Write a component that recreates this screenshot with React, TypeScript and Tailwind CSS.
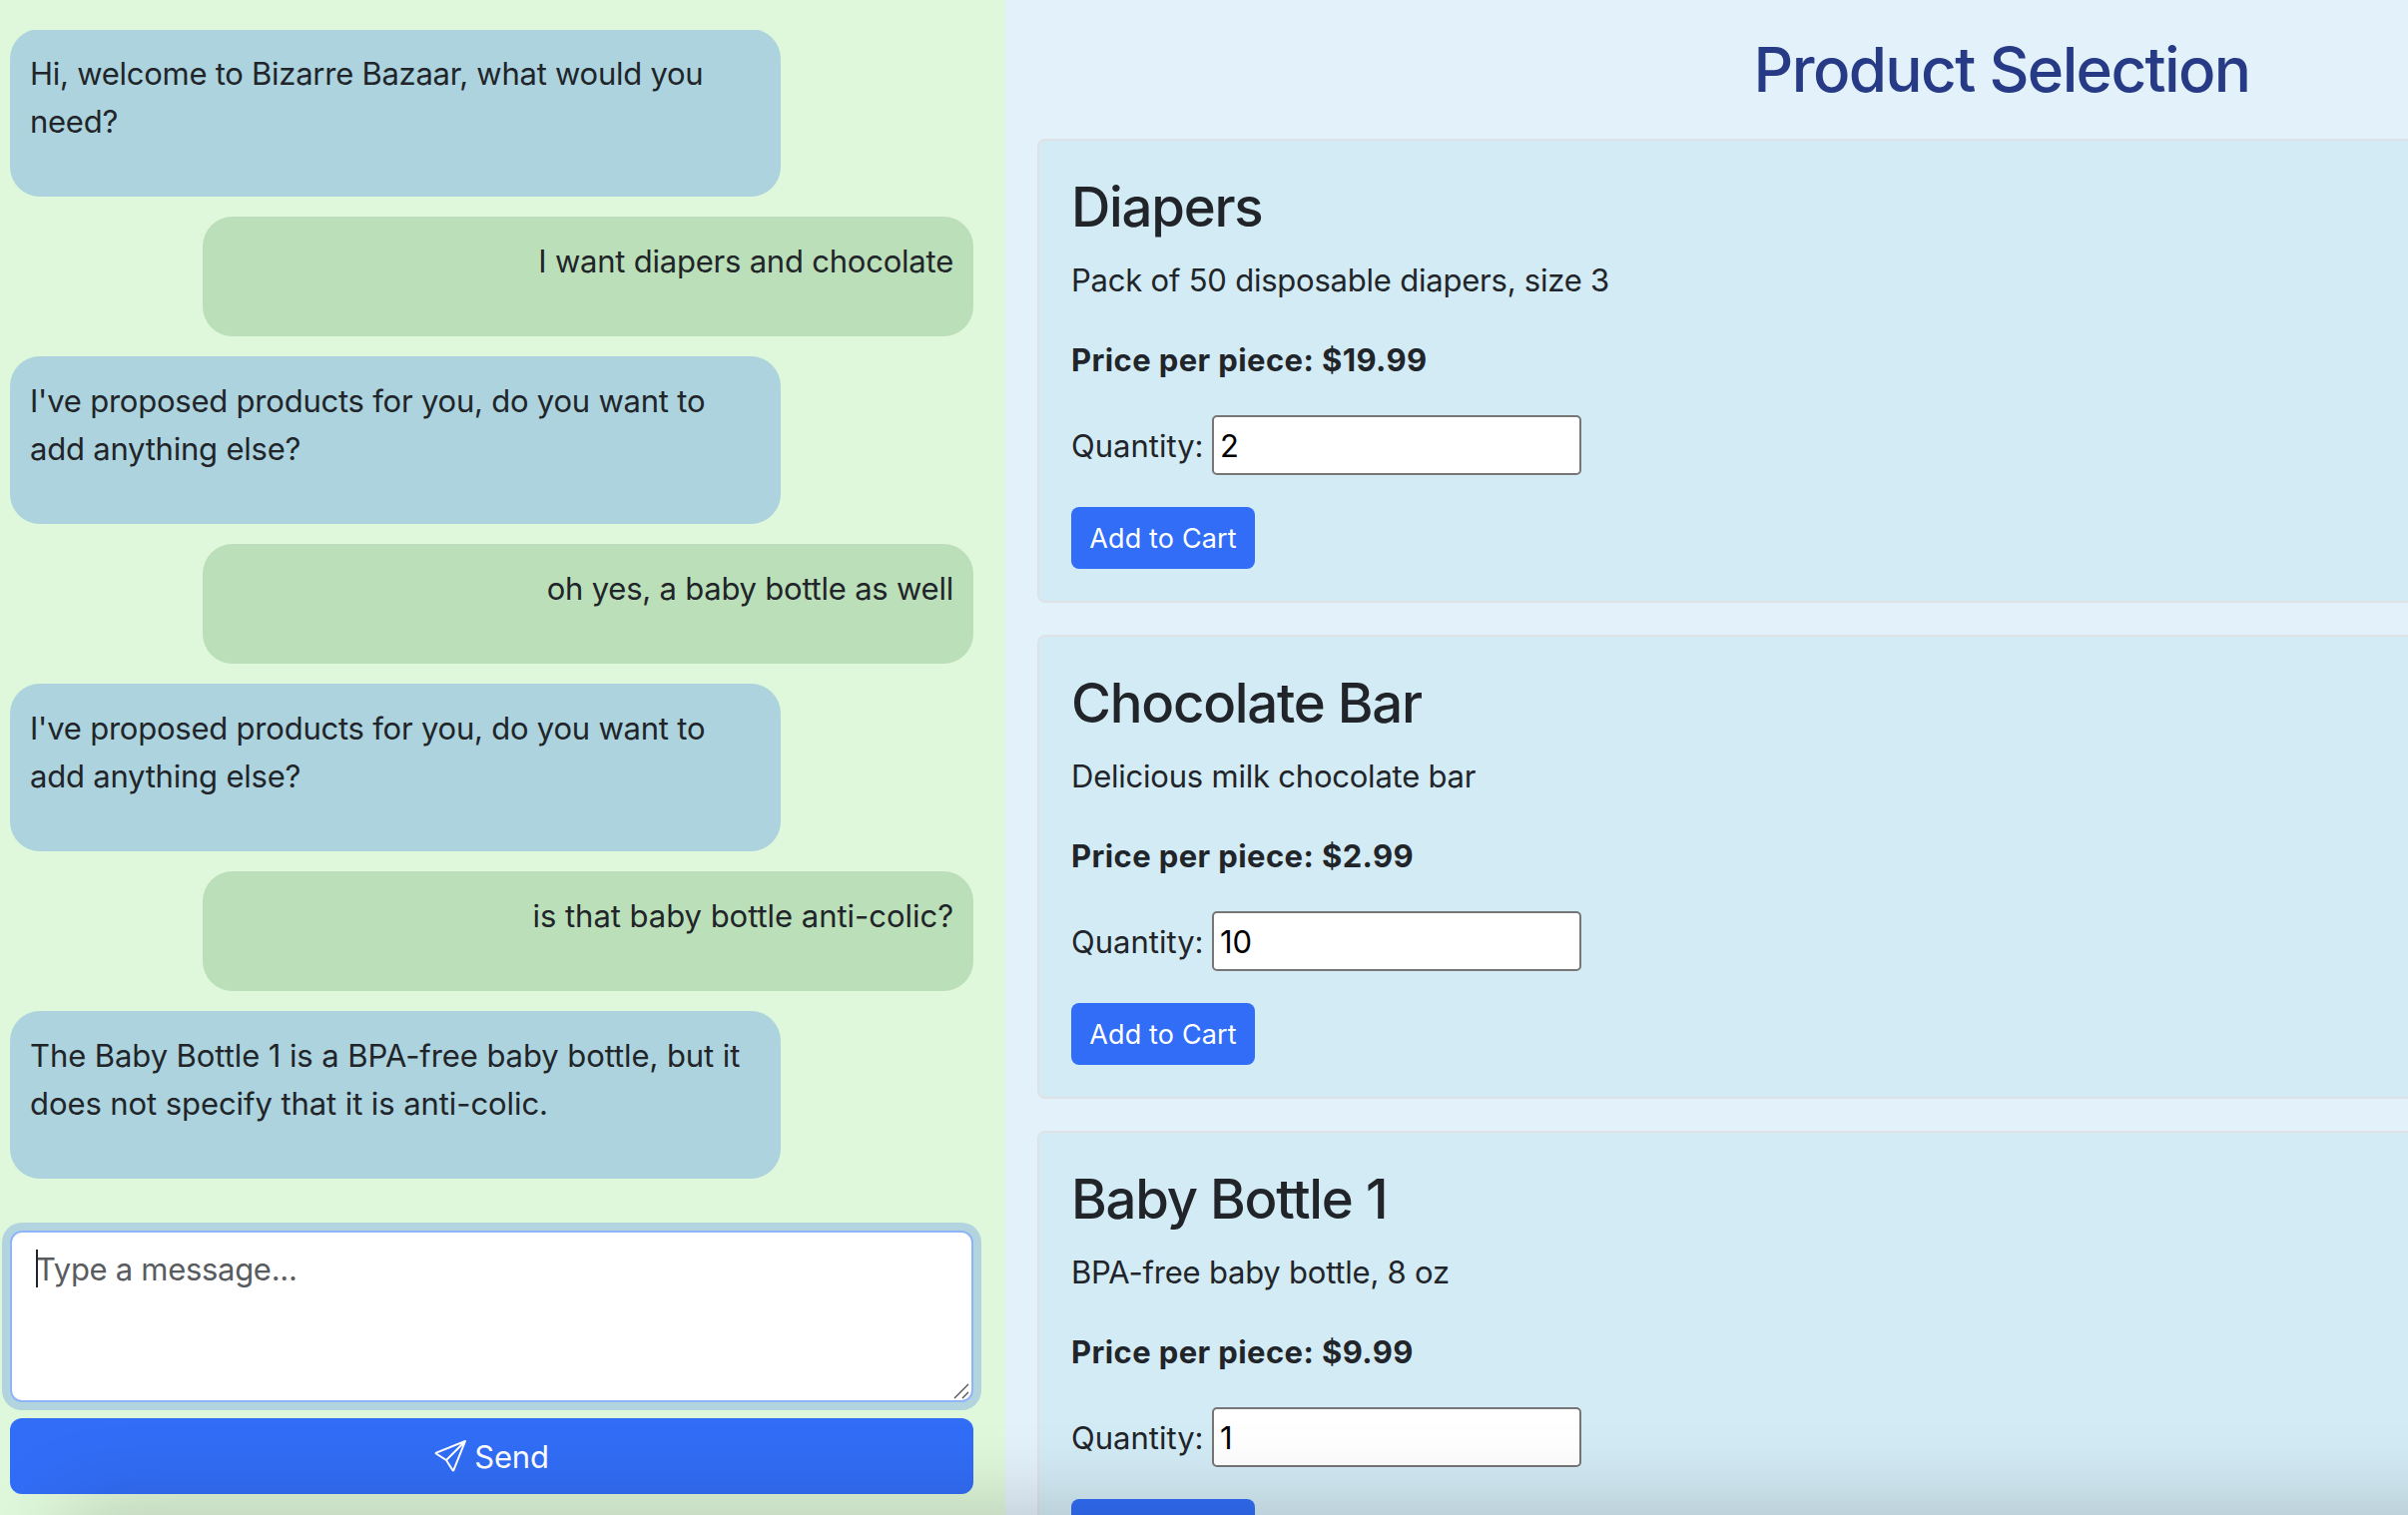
import { BsSend } from "react-icons/bs";

type Message = { from: "bot" | "user"; text: string; tracking?: string };
type Product = { name: string; description: string; price: string; quantity: number };

const messages: Message[] = [
  { from: "bot", text: "Hi, welcome to Bizarre Bazaar, what would you need?", tracking: "tracking-[-0.26px]" },
  { from: "user", text: "I want diapers and chocolate" },
  { from: "bot", text: "I've proposed products for you, do you want to add anything else?" },
  { from: "user", text: "oh yes, a baby bottle as well" },
  { from: "bot", text: "I've proposed products for you, do you want to add anything else?" },
  { from: "user", text: "is that baby bottle anti-colic?", tracking: "tracking-[-0.03px]" },
  {
    from: "bot",
    text: "The Baby Bottle 1 is a BPA-free baby bottle, but it does not specify that it is anti-colic.",
    tracking: "tracking-[-0.08px]",
  },
];

const products: Product[] = [
  { name: "Diapers", description: "Pack of 50 disposable diapers, size 3", price: "19.99", quantity: 2 },
  { name: "Chocolate Bar", description: "Delicious milk chocolate bar", price: "2.99", quantity: 10 },
  { name: "Baby Bottle 1", description: "BPA-free baby bottle, 8 oz", price: "9.99", quantity: 1 },
];

function Bubble({ from, text, tracking = "" }: Message) {
  const side = from === "bot" ? "self-start bg-[#acd3de]" : "self-end bg-[#bbdfb8] text-right";
  return (
    <div className={`w-[772px] shrink-0 rounded-[30px] px-5 pt-[21px] pb-[51px] ${side}`}>
      <p className={tracking}>{text}</p>
    </div>
  );
}

function ChatPanel() {
  return (
    <section className="flex w-[1007px] shrink-0 flex-col bg-[#dff7da] pt-[30px] pr-8 pl-2.5">
      <div className="h-[1203px] shrink-0 overflow-hidden">
        <div className="-mt-px flex flex-col gap-5">
          {messages.map((m, i) => (
            <Bubble key={i} {...m} />
          ))}
        </div>
      </div>
      <div className="relative h-[172px] shrink-0 rounded-xl border-2 border-[#8fb5f8] bg-white px-6 py-[13px] text-[#595c5f] ring-8 ring-[#b2d4df]">
        <span className="absolute top-[17px] left-6 h-[38px] w-[2px] bg-[#212529]" />
        <span className="tracking-[-0.3px]">Type a message...</span>
        <svg className="absolute right-0.5 bottom-px h-4 w-4" viewBox="0 0 16 16" stroke="#555" strokeWidth="1.4" fill="none">
          <path d="M1 15 15 1M9 15 15 9" />
        </svg>
      </div>
      <button className="mt-4 flex h-[76px] shrink-0 items-center justify-center gap-2 rounded-xl bg-[#316df6] pt-0.5 text-white">
        <BsSend className="-mt-0.5 h-8 w-8" />
        <span>Send</span>
      </button>
    </section>
  );
}

function ProductCard({ name, description, price, quantity }: Product) {
  return (
    <article className="h-[465px] shrink-0 rounded-lg border-2 border-[#dee2e6] bg-[#d3ebf5] p-8">
      <h3 className="pt-px text-[54.5px] leading-[67px] font-[530] tracking-[-1.25px]">{name}</h3>
      <p className="mt-4">{description}</p>
      <p className="mt-8 font-bold tracking-[0.4px]">Price per piece: ${price}</p>
      <div className="mt-[31px] flex h-[60px] items-center">
        <label className="w-[141px] pt-0.5 tracking-normal">Quantity:</label>
        <div className="flex h-[60px] w-[370px] items-center rounded-[5px] border-2 border-[#767676] bg-white px-1.5 pt-0.5 text-black">
          {quantity}
        </div>
      </div>
      <button className="mt-8 flex h-[62px] w-[184px] items-center justify-center rounded-lg bg-[#316df6] pt-px text-[27px] tracking-[0.15px] text-white">
        Add to Cart
      </button>
    </article>
  );
}

function ProductPanel() {
  return (
    <section className="flex w-[1996px] shrink-0 flex-col bg-[#e3f1fb] px-8 pt-[31px]">
      <h2 className="text-center text-[62px] leading-[77px] font-[530] tracking-[-1.65px] text-[#263a86]">
        Product Selection
      </h2>
      <div className="mt-[31px] flex flex-col gap-8">
        {products.map((p) => (
          <ProductCard key={p.name} {...p} />
        ))}
      </div>
    </section>
  );
}

export default function App() {
  return (
    <main className="relative flex h-[1518px] w-[2412px] overflow-hidden font-['Inter',sans-serif] text-[31px] leading-[48px] tracking-[-0.22px] text-[#212529]">
      <ChatPanel />
      <ProductPanel />
      <div className="pointer-events-none absolute top-full left-[68px] h-64 w-[2600px] shadow-[0_0_90px_rgba(0,0,0,0.21)]" />
    </main>
  );
}
